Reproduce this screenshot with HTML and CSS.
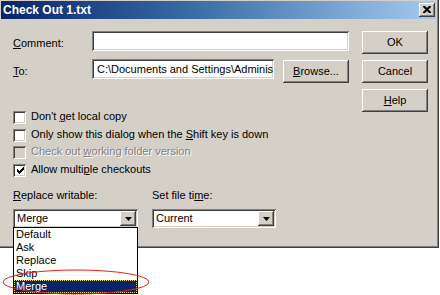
FILE: index.html
```html
<!DOCTYPE html>
<html>
<head>
<meta charset="utf-8">
<link rel="stylesheet" href="styles.css">
</head>
<body>
<div class="screen">
  <div class="window">
    <div class="titlebar">
      <span class="title">Check Out 1.txt</span>
      <span class="close-btn">
        <svg width="8" height="7" viewBox="0 0 8 7"><path d="M0 0h2l2 2 2-2h2v1l-2.5 2.5L8 6v1H6L4 5 2 7H0V6l2.5-2.5L0 1z" fill="#000"/></svg>
      </span>
    </div>
    <div class="body">
      <div class="main">
        <div class="row row-comment">
          <span class="lbl"><u>C</u>omment:</span>
          <div class="field field-comment"></div>
        </div>
        <div class="row row-to">
          <span class="lbl"><u>T</u>o:</span>
          <div class="field field-to"><span class="fval">C:\Documents and Settings\Adminis</span></div>
          <div class="btn btn-browse"><span><u>B</u>rowse...</span></div>
        </div>
        <div class="checks">
          <div class="check"><span class="box"></span><span class="ctext">Don't <u>g</u>et local copy</span></div>
          <div class="check"><span class="box"></span><span class="ctext">Only show this dialog when the <u>S</u>hift key is down</span></div>
          <div class="check disabled"><span class="box"></span><span class="ctext">Check out <u>w</u>orking folder version</span></div>
          <div class="check"><span class="box"><svg width="7" height="7" viewBox="0 0 7 7"><path d="M0 2h1v1h1v1h1V3h1V2h1V1h1V0h1v3H6v1H5v1H4v1H3v1H2V6H1V5H0z" fill="#000"/></svg></span><span class="ctext">Allow multi<u>p</u>le checkouts</span></div>
        </div>
        <div class="combos">
          <div class="combo-group group-replace">
            <span class="clbl"><u>R</u>eplace writable:</span>
            <div class="combo combo-replace">
              <span class="ctext-val">Merge</span>
              <span class="arrow-btn"><svg width="7" height="4" viewBox="0 0 7 4"><path d="M0 0h7L3.5 4z" fill="#000"/></svg></span>
            </div>
          </div>
          <div class="combo-group group-time">
            <span class="clbl">Set file ti<u>m</u>e:</span>
            <div class="combo combo-time">
              <span class="ctext-val">Current</span>
              <span class="arrow-btn"><svg width="7" height="4" viewBox="0 0 7 4"><path d="M0 0h7L3.5 4z" fill="#000"/></svg></span>
            </div>
          </div>
        </div>
      </div>
      <div class="side">
        <div class="btn"><span>OK</span></div>
        <div class="btn"><span>Cancel</span></div>
        <div class="btn"><span><u>H</u>elp</span></div>
      </div>
    </div>
  </div>
  <ul class="dropdown">
    <li>Default</li>
    <li>Ask</li>
    <li>Replace</li>
    <li>Skip</li>
    <li class="selected"><span>Merge</span></li>
  </ul>
  <svg class="mark" width="440" height="295" viewBox="0 0 440 295"><ellipse cx="76" cy="282" rx="73" ry="12" fill="none" stroke="#e8201c" stroke-width="1"/></svg>
</div>
</body>
</html>
```
FILE: styles.css
```css
* { box-sizing: border-box; }
html, body { margin: 0; padding: 0; background: #fff; }
body {
  font-family: "Liberation Sans", Arial, sans-serif;
  font-size: 11px;
  color: #000;
}
u { text-decoration: underline; text-underline-offset: 1px; }

.screen {
  position: relative;
  width: 440px;
  height: 295px;
  overflow: hidden;
  background: #fff;
}

.window {
  width: 439px;
  height: 248px;
  background: #d4d0c8;
  padding: 1px 3px 2px 1px;
  box-shadow: inset -1px -1px #404040, inset -2px -2px #808080;
  display: flex;
  flex-direction: column;
}

.titlebar {
  height: 18px;
  flex: none;
  background: linear-gradient(to right, #0a246a 0%, #3a6ea5 45%, #a6caf0 100%);
  display: flex;
  align-items: center;
  justify-content: space-between;
  padding: 0 1px 0 2px;
}
.title {
  font-weight: bold;
  font-size: 12px;
  color: #fff;
  line-height: 14px;
}
.close-btn {
  width: 16px;
  height: 14px;
  background: #d4d0c8;
  box-shadow: inset -1px -1px #404040, inset 1px 1px #fff, inset -2px -2px #808080;
  display: flex;
  align-items: center;
  justify-content: center;
  padding-bottom: 1px;
}
.close-btn svg { display: block; }

.body {
  display: flex;
  padding: 12px 0 0 12px;
}
.main {
  width: 336px;
  display: flex;
  flex-direction: column;
}
.side {
  margin-left: 13px;
  display: flex;
  flex-direction: column;
  gap: 6px;
}

.row {
  display: flex;
  align-items: flex-start;
}
.lbl {
  width: 79px;
  flex: none;
  line-height: 13px;
  padding-top: 6px;
}
.row-to { margin-top: 8px; }

.field {
  height: 20px;
  flex: none;
  background: #fff;
  box-shadow: inset 1px 1px #808080, inset -1px -1px #fff, inset 2px 2px #404040, inset -2px -2px #d4d0c8;
  padding: 4px 3px 0 5px;
  line-height: 13px;
  white-space: nowrap;
  overflow: hidden;
}
.field-comment { width: 257px; }
.field-to { width: 182px; }

.btn {
  width: 66px;
  height: 23px;
  flex: none;
  background: #d4d0c8;
  box-shadow: inset -1px -1px #404040, inset 1px 1px #fff, inset -2px -2px #808080;
  display: flex;
  align-items: center;
  justify-content: center;
  line-height: 13px;
  padding-bottom: 1px;
}
.btn-browse { margin: 1px 0 0 9px; }

.checks {
  margin-top: 26px;
  display: flex;
  flex-direction: column;
}
.check {
  height: 17.5px;
  display: flex;
  align-items: center;
}
.box {
  width: 13px;
  height: 13px;
  flex: none;
  background: #fff;
  box-shadow: inset 1px 1px #808080, inset -1px -1px #fff, inset 2px 2px #404040, inset -2px -2px #d4d0c8;
  display: flex;
  align-items: center;
  justify-content: center;
}
.box svg { display: block; margin: 1px 0 0 1px; }
.ctext {
  margin-left: 5px;
  line-height: 13px;
  margin-top: -2px;
  white-space: nowrap;
}
.check.disabled .box { background: #d4d0c8; }
.check.disabled .ctext { color: #808080; text-shadow: 1px 1px #fff; }

.combos {
  margin-top: 10px;
  display: flex;
  gap: 14px;
}
.combo-group {
  display: flex;
  flex-direction: column;
}
.clbl { line-height: 13px; }
.combo {
  margin-top: 7px;
  height: 19px;
  background: #fff;
  box-shadow: inset 1px 1px #808080, inset -1px -1px #fff, inset 2px 2px #404040, inset -2px -2px #d4d0c8;
  display: flex;
  align-items: center;
  justify-content: space-between;
  padding: 2px 2px 2px 4px;
}
.combo-replace { width: 125px; }
.combo-time { width: 124px; }
.ctext-val { line-height: 13px; }
.arrow-btn {
  width: 16px;
  height: 15px;
  background: #d4d0c8;
  box-shadow: inset -1px -1px #404040, inset 1px 1px #fff, inset -2px -2px #808080;
  display: flex;
  align-items: center;
  justify-content: center;
}
.arrow-btn svg { display: block; }

.dropdown {
  position: absolute;
  left: 13px;
  top: 227px;
  width: 125px;
  margin: 0;
  padding: 0;
  list-style: none;
  background: #fff;
  border: 1px solid #000;
}
.dropdown li {
  height: 13px;
  line-height: 13px;
  padding-left: 2px;
}
.dropdown li.selected {
  background: #0a246a;
  color: #fff;
  outline: 1px dotted #f0e060;
  outline-offset: -1px;
}

.mark {
  position: absolute;
  left: 0;
  top: 0;
  pointer-events: none;
}
```
